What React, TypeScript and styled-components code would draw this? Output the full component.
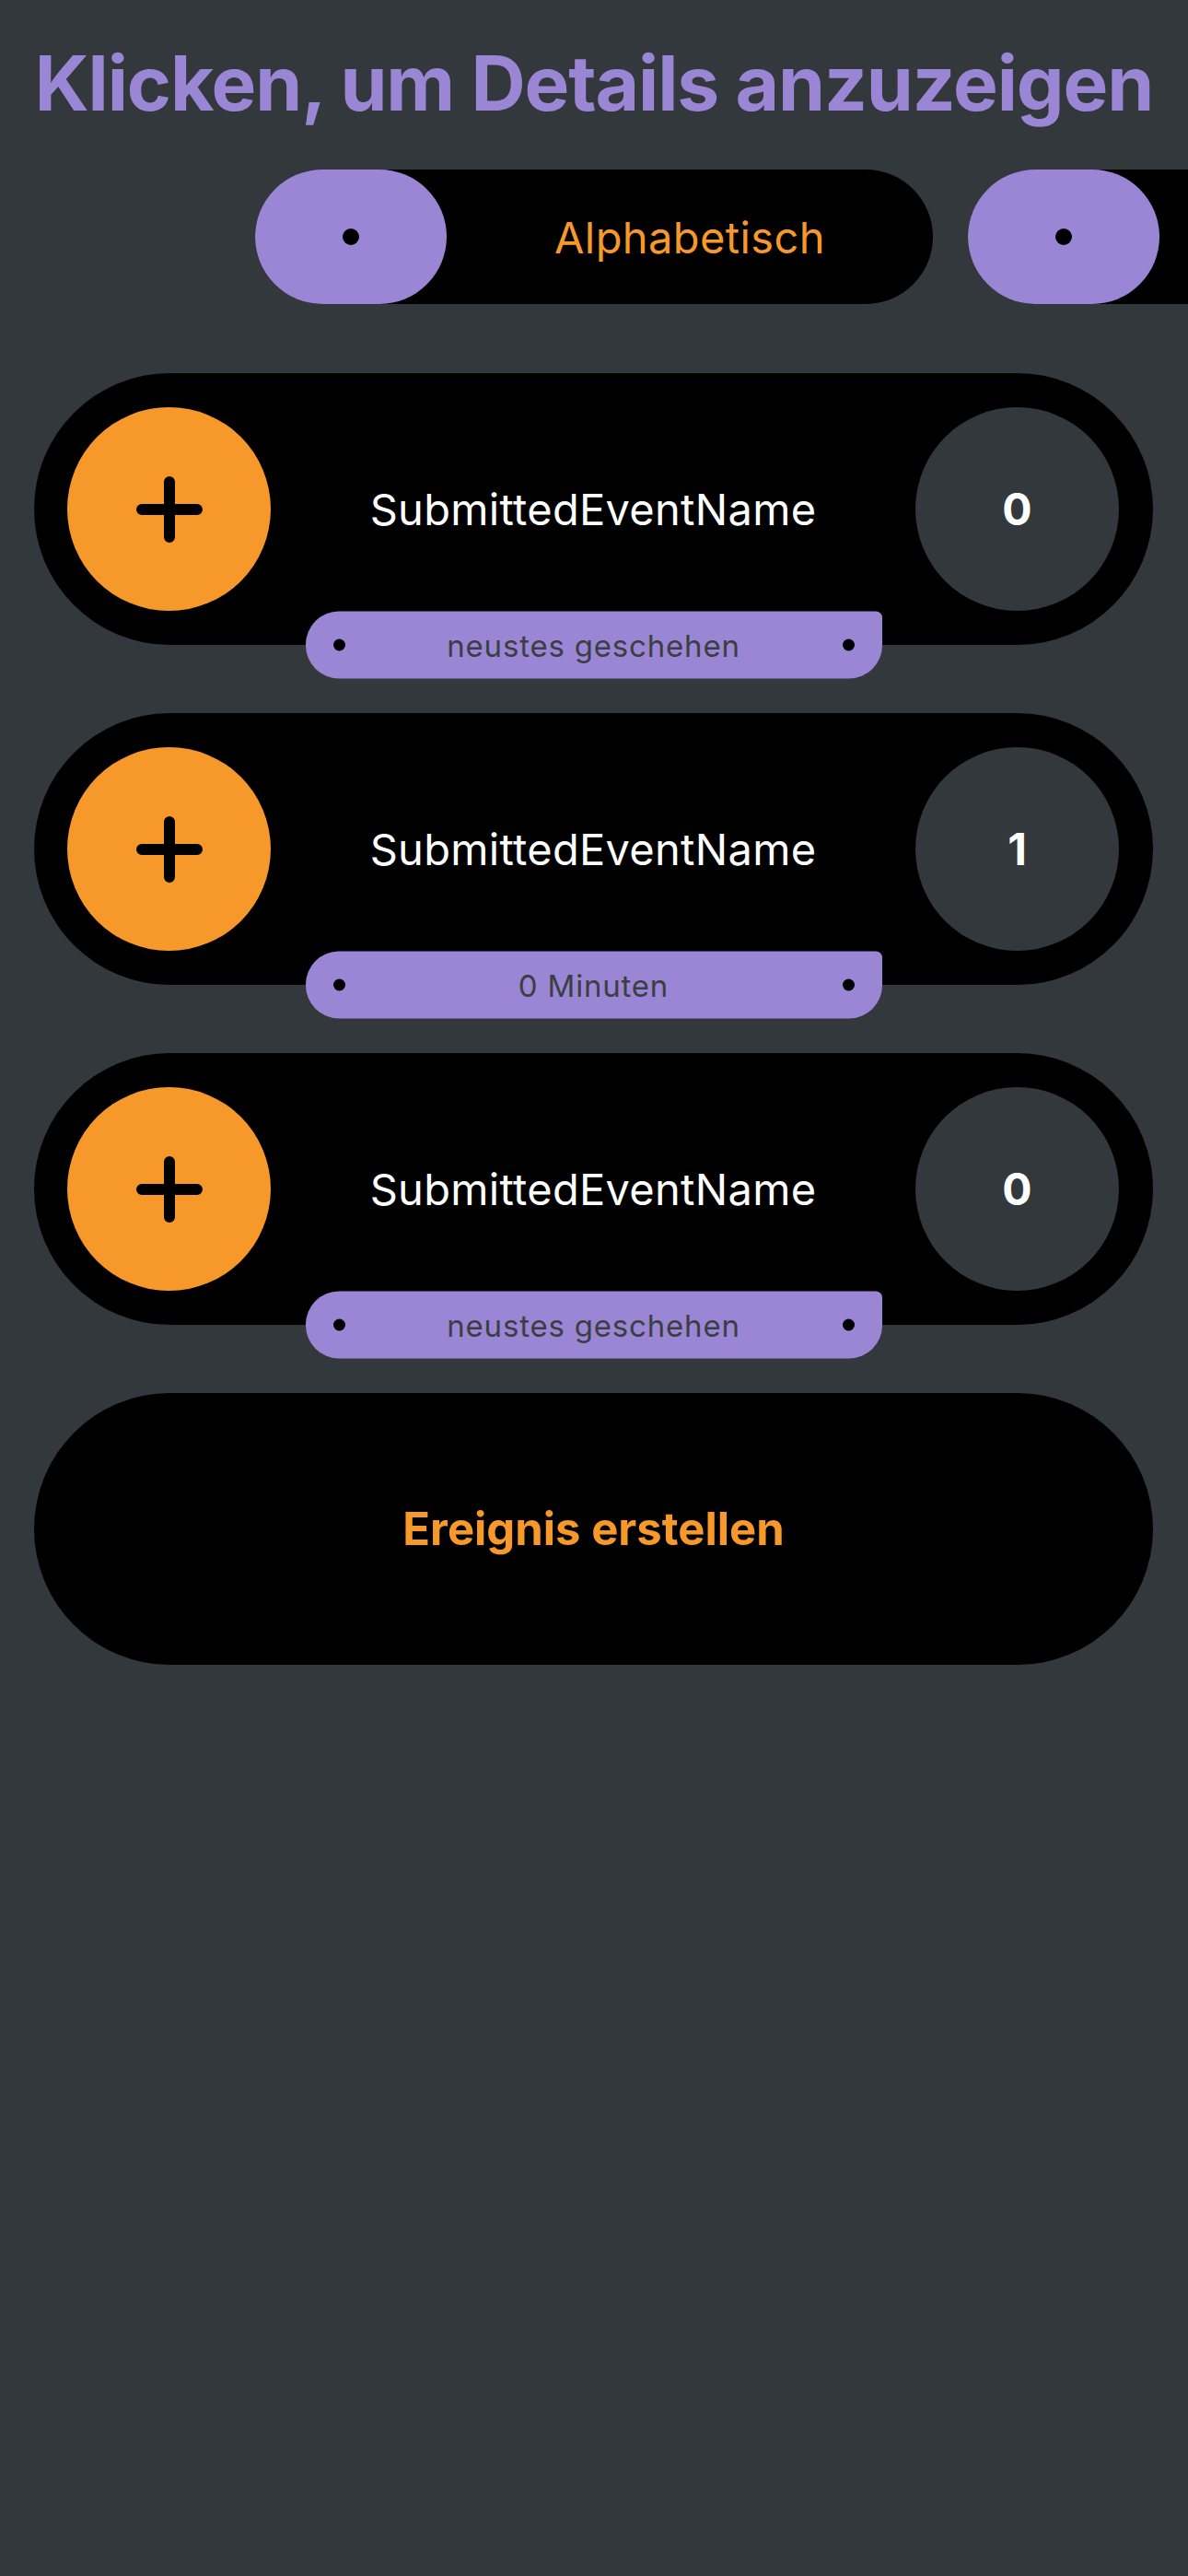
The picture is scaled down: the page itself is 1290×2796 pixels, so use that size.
import React from 'react';
import styled, { createGlobalStyle } from 'styled-components';

interface EventItem {
  name: string;
  count: number;
  last: string;
}

const events: EventItem[] = [
  { name: 'SubmittedEventName', count: 0, last: 'neustes geschehen' },
  { name: 'SubmittedEventName', count: 1, last: '0 Minuten' },
  { name: 'SubmittedEventName', count: 0, last: 'neustes geschehen' },
];

// second option sits off screen, only its knob peeks in
const sortOptions = ['Alphabetisch', ''];

function PlusIcon() {
  return (
    <svg width="72" height="72" viewBox="0 0 72 72" fill="none">
      <path d="M36 6v60M6 36h60" stroke="#000" strokeWidth="12" strokeLinecap="round" />
    </svg>
  );
}

function EventCard(props: EventItem) {
  return (
    <Card>
      <AddButton>
        <PlusIcon />
      </AddButton>
      <EventName>{props.name}</EventName>
      <Counter>{props.count}</Counter>
      <Tag>
        <Dot $size={13} />
        <TagText>{props.last}</TagText>
        <Dot $size={13} />
      </Tag>
    </Card>
  );
}

export default function App() {
  return (
    <>
      <GlobalStyle />
      <Page>
        <Title>Klicken, um Details anzuzeigen</Title>
        <SortRow>
          {sortOptions.map((label, i) => (
            <SortPill key={i}>
              <SortKnob>
                <Dot $size={18} />
              </SortKnob>
              <SortLabel>{label}</SortLabel>
            </SortPill>
          ))}
        </SortRow>
        <List>
          {events.map((e, i) => (
            <EventCard key={i} {...e} />
          ))}
          <CreateButton>Ereignis erstellen</CreateButton>
        </List>
      </Page>
    </>
  );
}

const GlobalStyle = createGlobalStyle`
  body {
    margin: 0;
    background: #32383b;
    font-family: Inter, "Noto Sans", sans-serif;
  }
`;

const Page = styled.div`
  min-height: 2796px;
  background: #32383b;
  overflow: hidden;
`;

const Title = styled.h1`
  margin: 41px 0 0;
  font-size: 82px;
  line-height: 100px;
  font-weight: 700;
  color: #9a86d4;
  text-align: center;
  white-space: nowrap;
  letter-spacing: -1.1px;
`;

const SortRow = styled.div`
  display: flex;
  gap: 38px;
  margin-top: 43px;
  padding-left: 277px;
`;

const SortPill = styled.div`
  flex: 0 0 736px;
  height: 146px;
  border-radius: 73px;
  background: #000;
  display: flex;
  align-items: center;
`;

const SortKnob = styled.div`
  width: 208px;
  height: 146px;
  border-radius: 73px;
  background: #9a86d4;
  display: flex;
  align-items: center;
  justify-content: center;
`;

const SortLabel = styled.span`
  flex: 1;
  text-align: center;
  color: #f7992a;
  font-size: 47px;
  letter-spacing: 0.4px;
`;

const Dot = styled.span<{ $size: number }>`
  width: ${(p) => p.$size}px;
  height: ${(p) => p.$size}px;
  border-radius: 50%;
  background: #000;
  flex-shrink: 0;
`;

const List = styled.div`
  display: flex;
  flex-direction: column;
  gap: 74px;
  margin-top: 75px;
  padding: 0 38px 0 37px;
`;

const Card = styled.div`
  position: relative;
  height: 295px;
  border-radius: 148px;
  background: #000;
  display: flex;
  align-items: center;
  padding: 0 37px 0 36px;
`;

const Circle = styled.div`
  width: 221px;
  height: 221px;
  border-radius: 50%;
  display: flex;
  align-items: center;
  justify-content: center;
  flex-shrink: 0;
`;

const AddButton = styled(Circle)`
  background: #f7992a;
`;

const Counter = styled(Circle)`
  background: #32383b;
  color: #fff;
  font-size: 48px;
  font-weight: 700;
`;

const EventName = styled.span`
  flex: 1;
  text-align: center;
  color: #fff;
  font-size: 47px;
  letter-spacing: 0.3px;
`;

const Tag = styled.div`
  position: absolute;
  left: 50%;
  bottom: 0;
  transform: translate(-50%, 50%);
  width: 626px;
  height: 73px;
  box-sizing: border-box;
  padding: 0 30px;
  border-radius: 36px 7px 36px 36px;
  background: #9a86d4;
  display: flex;
  align-items: center;
`;

const TagText = styled.span`
  flex: 1;
  text-align: center;
  color: #3b3f43;
  font-size: 33px;
  letter-spacing: 0.8px;
`;

const CreateButton = styled.button`
  height: 295px;
  border: none;
  border-radius: 148px;
  background: #000;
  color: #f7992a;
  font-family: Inter, "Noto Sans", sans-serif;
  font-size: 49px;
  font-weight: 700;
  cursor: pointer;
`;
